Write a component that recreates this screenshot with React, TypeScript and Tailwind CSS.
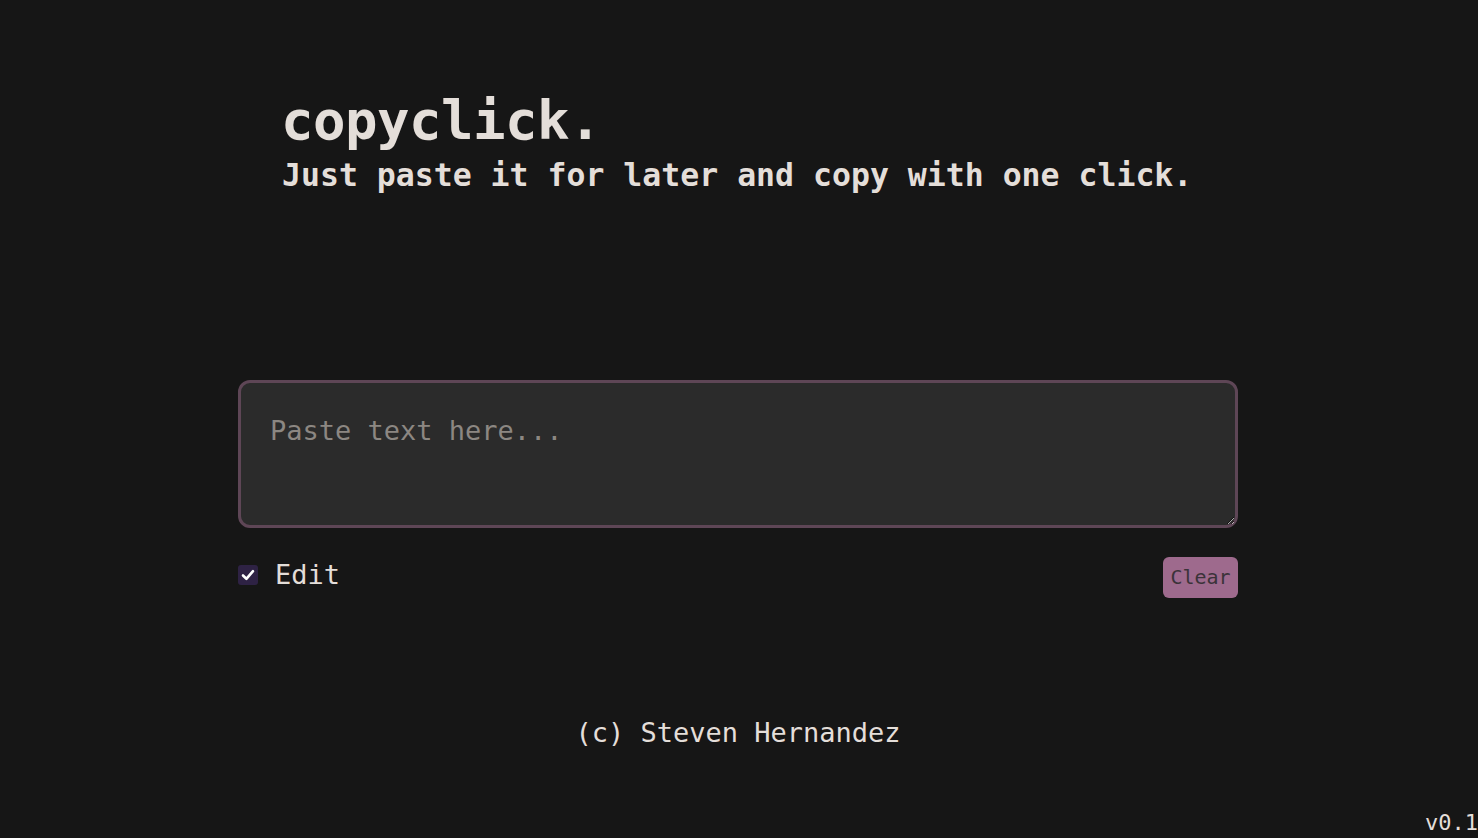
import React from "react";

export default function App() {
  return (
    <div
      className="relative h-[838px] w-full overflow-hidden bg-[#161616] text-[#e4ded9]"
      style={{ fontFamily: '"DejaVu Sans Mono", "Liberation Mono", monospace' }}
    >
      <div className="ml-[238px] flex w-[1000px] flex-col">
        <header className="ml-[45px] flex flex-col gap-[12px] pt-[94px]">
          <h1 className="-ml-[2px] text-[54px] font-bold leading-none tracking-[-0.5px]">copyclick.</h1>
          <p className="-ml-[1px] text-[31.5px] font-bold leading-none">Just paste it for later and copy with one click.</p>
        </header>

        <textarea
          placeholder="Paste text here..."
          className="mt-[188px] h-[148px] w-[1000px] rounded-[12px] border-[3px] border-[#5e4656] bg-[#2b2b2b] px-[29px] pt-[28px] text-[27px] leading-[1.5] text-[#e4ded9] outline-none placeholder:text-[#8c8782]"
          style={{ fontFamily: '"DejaVu Sans Mono", "Liberation Mono", monospace' }}
        />

        <div className="mt-[29px] flex h-[41px] items-center justify-between">
          <label className="mb-[5px] flex items-center gap-[17px]">
            <span className="flex h-[20px] w-[20px] items-center justify-center rounded-[3px] bg-[#2e2244]">
              <svg width="16" height="16" viewBox="0 0 16 16" fill="none">
                <path d="M3 8.5 L6.4 11.8 L13 4.2" stroke="#ffffff" strokeWidth="2.6" strokeLinecap="round" strokeLinejoin="round" />
              </svg>
            </span>
            <span className="text-[27px] leading-none">Edit</span>
          </label>
          <button className="h-[41px] w-[75px] rounded-[6px] bg-[#9e6a8d] text-[20px] leading-none text-[#3b3339]">
            Clear
          </button>
        </div>

        <footer className="mt-[121px] flex justify-center">
          <span className="text-[27px] leading-none">(c) Steven Hernandez</span>
        </footer>
      </div>

      <div className="absolute bottom-[4px] right-0 text-[22px] leading-none text-[#e4ded9]">v0.1</div>
    </div>
  );
}
